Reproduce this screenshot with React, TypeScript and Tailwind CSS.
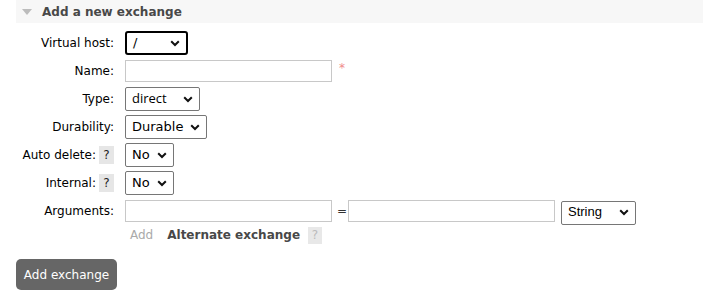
import React from "react";

const Chevron = () => (
  <svg width="10" height="7" viewBox="0 0 10 7" className="shrink-0">
    <path d="M1.2 1.2 L5 5 L8.8 1.2" fill="none" stroke="#111" strokeWidth="2" />
  </svg>
);

function Sel({ w, text, focus, font }: { w: number; text: string; focus?: boolean; font?: string }) {
  return (
    <div
      className={
        "flex items-center justify-between h-[24px] pl-[6px] pr-[6px] bg-white text-[13px] text-black " +
        (focus ? "border-2 border-black rounded-[3px] pl-[5px] pr-[5px]" : "border border-[#767676] rounded-[2px]")
      }
      style={{ width: w, fontFamily: font }}
    >
      <span className="leading-none -mt-[2px]">{text}</span>
      <Chevron />
    </div>
  );
}

const Input = ({ w }: { w: number }) => (
  <div className="h-[22px] border border-[#c8c8c8] bg-white" style={{ width: w }} />
);

const Help = () => (
  <span className="inline-flex items-center justify-center w-[15px] h-[18px] bg-[#e6e6e6] text-[12px] text-[#222] ml-[3px]">?</span>
);

function Row({ label, help, children }: { label: string; help?: boolean; children: React.ReactNode }) {
  return (
    <div className="flex items-center h-[28px]">
      <div className="w-[98px] flex items-center justify-end text-[12px] text-black">
        <span>{label}</span>
        {help && <Help />}
      </div>
      <div className="ml-[11px] flex items-center">{children}</div>
    </div>
  );
}

export default function App() {
  return (
    <div className="w-[703px] h-[298px] bg-white" style={{ fontFamily: "'DejaVu Sans', Verdana, sans-serif" }}>
      <div className="ml-[16px] h-[23px] bg-[#f7f7f7] flex items-center">
        <svg width="10" height="6" viewBox="0 0 10 6" className="ml-[6px]">
          <path d="M0 0 H10 L5 6 Z" fill="#bcbcbc" />
        </svg>
        <span className="ml-[10px] text-[12px] font-bold text-[#484848]">Add a new exchange</span>
      </div>
      <div className="ml-[16px] mt-[6px]">
        <Row label="Virtual host:">
          <Sel w={63} text="/" focus />
        </Row>
        <Row label="Name:">
          <Input w={207} />
          <span className="ml-[7px] text-[#f08a8a] text-[12px] -mt-[6px]">*</span>
        </Row>
        <Row label="Type:">
          <Sel w={75} text="direct" font="'Open Sans', sans-serif" />
        </Row>
        <Row label="Durability:">
          <Sel w={82} text="Durable" font="'DejaVu Sans', sans-serif" />
        </Row>
        <Row label="Auto delete:" help>
          <Sel w={49} text="No" font="'DejaVu Sans', sans-serif" />
        </Row>
        <Row label="Internal:" help>
          <Sel w={49} text="No" font="'DejaVu Sans', sans-serif" />
        </Row>
        <Row label="Arguments:">
          <Input w={207} />
          <span className="ml-[4px] w-[12px] text-center text-[12px] text-[#333]">=</span>
          <Input w={207} />
          <div className="ml-[6px] mt-[3px]">
            <Sel w={75} text="String" font="'Liberation Sans', Arial, sans-serif" />
          </div>
        </Row>
        <div className="flex items-center h-[20px]">
          <span className="ml-[114px] text-[12px] text-[#aaa]">Add</span>
          <span className="ml-[14px] text-[12px] font-bold text-[#484848]">Alternate exchange</span>
          <span className="ml-[8px] inline-flex items-center justify-center w-[14px] h-[17px] bg-[#e8e8e8] text-[12px] text-[#bbb]">?</span>
        </div>
        <button className="mt-[14px] w-[101px] h-[31px] rounded-[5px] bg-[#666] text-white text-[12px]">
          Add exchange
        </button>
      </div>
    </div>
  );
}
